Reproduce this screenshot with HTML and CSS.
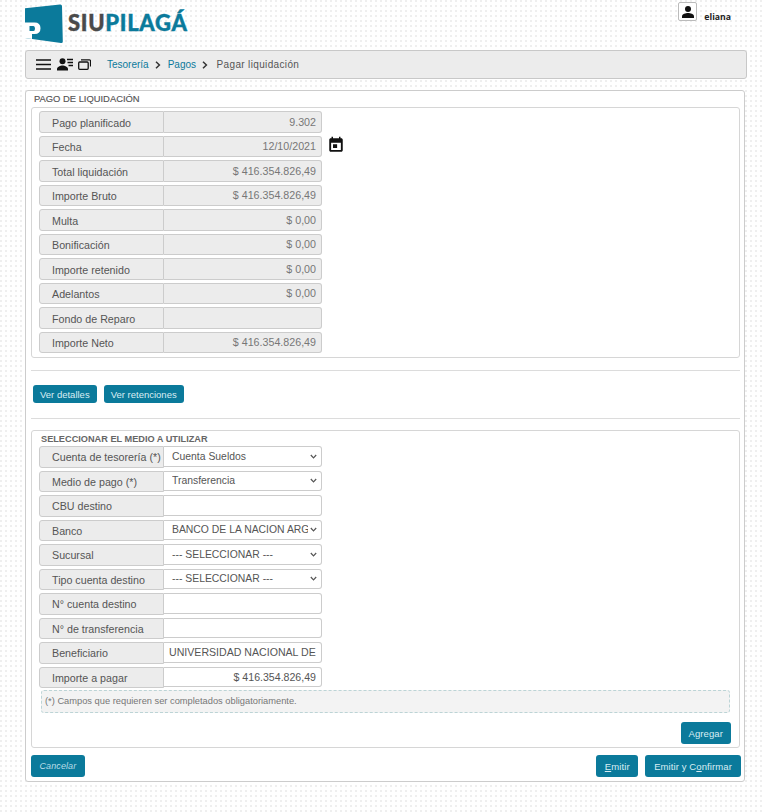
FILE: index.html
```html
<!DOCTYPE html>
<html lang="es">
<head>
<meta charset="utf-8">
<title>SIU Pilagá - Pagar liquidación</title>
<link rel="stylesheet" href="styles.css">
</head>
<body>
<header class="top">
  <div class="brand">
    <svg class="logo" width="38" height="40" viewBox="0 0 38 40">
      <path d="M0 4.200 L35 .4 Q37 .2 37 2.200 L37.800 37.500 Q37.800 39.300 36 39 L0 34 Z" fill="#0b7a9b"/>
      <path fill-rule="evenodd" fill="#fff" d="M0 18.500 H9.500 Q15.500 18.500 15.500 24.200 Q15.500 30 9.500 30 H7 V34.900 L0 34 Z M4.500 22 V27 H8.500 Q10 27 10 24.500 Q10 22 8.500 22 Z"/>
    </svg>
    <span class="brand-name"><span class="brand-siu">SIU</span>PILAGÁ</span>
  </div>
  <div class="user">
    <span class="user-box">
      <svg width="16" height="16" viewBox="0 0 24 24"><circle cx="12" cy="7.500" r="4.500" fill="#111"/><path d="M3 21v-2.500C3 15 8.500 13.500 12 13.500s9 1.500 9 5V21z" fill="#111"/></svg>
    </span>
    <span class="user-name">eliana</span>
  </div>
</header>

<nav class="toolbar">
  <div class="tools">
    <svg width="15" height="11" viewBox="0 0 15 11"><path d="M0 1h15M0 5.500h15M0 10h15" stroke="#111" stroke-width="1.700" fill="none"/></svg>
    <svg width="16" height="13" viewBox="0 0 16 13"><circle cx="5.500" cy="3.300" r="3" fill="#111"/><path d="M0 12.500v-1.500C0 8.700 3.500 7.500 5.500 7.500s5.500 1.200 5.500 3.500v1.500z" fill="#111"/><path d="M10 1.500h6M10.500 4.500h5.500M11.500 7.500h4.500" stroke="#111" stroke-width="1.300"/></svg>
    <svg width="13" height="11" viewBox="0 0 13 11"><rect x=".7" y="3" width="9.500" height="7.300" rx="1" fill="none" stroke="#111" stroke-width="1.300"/><path d="M3 .8h8.500a1 1 0 0 1 1 1V7.500" fill="none" stroke="#111" stroke-width="1.200"/></svg>
  </div>
  <ol class="crumbs">
    <li><a href="#">Tesorería</a></li>
    <li class="sep"><svg width="6" height="8" viewBox="0 0 6 8"><path d="M1 .8 4.400 4 1 7.200" fill="none" stroke="#333" stroke-width="1.500"/></svg></li>
    <li><a href="#">Pagos</a></li>
    <li class="sep"><svg width="6" height="8" viewBox="0 0 6 8"><path d="M1 .8 4.400 4 1 7.200" fill="none" stroke="#333" stroke-width="1.500"/></svg></li>
    <li class="crumb-current">Pagar liquidación</li>
  </ol>
</nav>

<main class="panel">
  <h2 class="panel-title">PAGO DE LIQUIDACIÓN</h2>
  <section class="group group-pago">
    <div class="row"><span class="lbl">Pago planificado</span><span class="val">9.302</span></div>
    <div class="row-with-icon">
      <div class="row"><span class="lbl">Fecha</span><span class="val">12/10/2021</span></div>
      <svg class="cal" width="18" height="18" viewBox="0 0 24 24"><path fill="#111" fill-rule="evenodd" d="M6 1v2H5C3.900 3 3 3.900 3 5v14c0 1.100.9 2 2 2h14c1.100 0 2-.9 2-2V5c0-1.100-.9-2-2-2h-1V1h-2v2H8V1H6zM5.500 9h13v9.500h-13z"/><rect x="8" y="11" width="5.500" height="5" fill="#111"/></svg>
    </div>
    <div class="row"><span class="lbl">Total liquidación</span><span class="val">$ 416.354.826,49</span></div>
    <div class="row"><span class="lbl">Importe Bruto</span><span class="val">$ 416.354.826,49</span></div>
    <div class="row"><span class="lbl">Multa</span><span class="val">$ 0,00</span></div>
    <div class="row"><span class="lbl">Bonificación</span><span class="val">$ 0,00</span></div>
    <div class="row"><span class="lbl">Importe retenido</span><span class="val">$ 0,00</span></div>
    <div class="row"><span class="lbl">Adelantos</span><span class="val">$ 0,00</span></div>
    <div class="row"><span class="lbl">Fondo de Reparo</span><span class="val"></span></div>
    <div class="row"><span class="lbl">Importe Neto</span><span class="val">$ 416.354.826,49</span></div>
  </section>

  <hr class="rule rule-a">
  <div class="actions">
    <button class="btn btn-sm" type="button">Ver detalles</button>
    <button class="btn btn-sm" type="button">Ver retenciones</button>
  </div>
  <hr class="rule rule-b">

  <section class="group group-medio">
    <h3 class="group-title">SELECCIONAR EL MEDIO A UTILIZAR</h3>
    <div class="row"><label class="lbl">Cuenta de tesorería (*)</label><select class="ctl"><option>Cuenta Sueldos</option></select></div>
    <div class="row"><label class="lbl">Medio de pago (*)</label><select class="ctl"><option>Transferencia</option></select></div>
    <div class="row"><label class="lbl">CBU destino</label><input class="ctl" type="text"></div>
    <div class="row"><label class="lbl">Banco</label><select class="ctl"><option>BANCO DE LA NACION ARGENTINA</option></select></div>
    <div class="row"><label class="lbl">Sucursal</label><select class="ctl"><option>--- SELECCIONAR ---</option></select></div>
    <div class="row"><label class="lbl">Tipo cuenta destino</label><select class="ctl"><option>--- SELECCIONAR ---</option></select></div>
    <div class="row"><label class="lbl">N° cuenta destino</label><input class="ctl" type="text"></div>
    <div class="row"><label class="lbl">N° de transferencia</label><input class="ctl" type="text"></div>
    <div class="row"><label class="lbl">Beneficiario</label><input class="ctl ctl-left" type="text" value="UNIVERSIDAD NACIONAL DE SAN JUAN"></div>
    <div class="row"><label class="lbl">Importe a pagar</label><input class="ctl ctl-right" type="text" value="$ 416.354.826,49"></div>
    <p class="note">(*) Campos que requieren ser completados obligatoriamente.</p>
    <div class="add-line"><button class="btn btn-add" type="button">Agregar</button></div>
  </section>

  <footer class="foot">
    <button class="btn btn-cancel" type="button">Cancelar</button>
    <div class="foot-right">
      <button class="btn" type="button"><u>E</u>mitir</button>
      <button class="btn btn-wide" type="button">Emitir y C<u>o</u>nfirmar</button>
    </div>
  </footer>
</main>
</body>
</html>
```

FILE: styles.css
```css
* { box-sizing: border-box; }

html, body { margin: 0; padding: 0; }

body {
  width: 763px;
  height: 812px;
  overflow: hidden;
  padding-left: 25px;
  font-family: "Liberation Sans", Arial, sans-serif;
  font-size: 10.700px;
  color: #555;
  background-color: #fff;
  background-image: radial-gradient(circle at 1px 1px, #efefef .8px, transparent 1px);
  background-size: 5px 5px;
}

/* header */
.top {
  display: flex;
  justify-content: space-between;
  height: 50px;
  width: 714px;
}

.brand { display: flex; align-items: flex-start; gap: 5px; padding-top: 4px; }
.logo { display: block; flex: none; }

.brand-name {
  font-family: Lato, "Open Sans", sans-serif;
  font-weight: 900;
  font-size: 22px;
  line-height: 30px;
  letter-spacing: .7px;
  color: #0b7a9b;
  -webkit-text-stroke: .4px currentColor;
  margin-top: 4px;
}
.brand-siu { color: #4a4a4a; }

.user { display: flex; align-items: flex-start; gap: 7px; padding-top: 2px; margin-right: 8px; }
.user-box {
  display: flex;
  align-items: center;
  justify-content: center;
  width: 19px;
  height: 19px;
  border: 1px solid #bbb;
  border-radius: 2px;
  background: #fff;
}
.user-name {
  font-family: "Open Sans", sans-serif;
  font-weight: 700;
  font-size: 8.700px;
  color: #222;
  margin-top: 9px;
  line-height: 13px;
}

/* toolbar */
.toolbar {
  display: flex;
  align-items: center;
  width: 722px;
  height: 29px;
  padding-left: 10px;
  background: #ececec;
  border: 1px solid #c8c8c8;
  border-radius: 3px;
}
.tools { display: flex; align-items: center; gap: 5.500px; width: 71px; }
.tools svg { display: block; flex: none; }

.crumbs {
  display: flex;
  align-items: center;
  margin: 0;
  padding: 0;
  list-style: none;
  font-size: 10px;
  color: #555;
}
.crumbs a { color: #0b7a9b; text-decoration: none; }
.sep { display: flex; padding: 0 7px 0 6px; }
.crumb-current { margin-left: 1.500px; letter-spacing: .35px; }

/* main panel */
.panel {
  width: 720px;
  height: 692px;
  margin-top: 11px;
  padding: 0 3px 0 5px;
  background: #fff;
  border: 1px solid #ccc;
  border-radius: 3px;
}

.panel-title {
  margin: 0 0 0 3px;
  height: 16px;
  font-size: 9.400px;
  font-weight: 400;
  line-height: 15px;
  color: #555;
  -webkit-text-stroke: .15px #555;
}

.group {
  width: 709px;
  background: #fff;
  border: 1px solid #d6d6d6;
  border-radius: 3px;
  padding: 3px 6px 0 7px;
}
.group-pago { height: 251px; }
.group-medio { height: 318px; padding-top: 0; }
.group-medio .lbl { padding-top: 1px; }

.group-title {
  margin: 0 0 0 2px;
  height: 15px;
  font-size: 9.200px;
  font-weight: 700;
  line-height: 16px;
  color: #666;
}

.rule {
  width: 709px;
  height: 1px;
  margin: 0;
  border: 0;
  background: #dcdcdc;
}
.rule-a { margin-top: 12px; }
.rule-b { margin-top: 15px; margin-bottom: 11px; }

.actions { display: flex; gap: 7px; padding: 14px 0 0 2px; }

/* rows */
.row {
  display: flex;
  width: 283px;
  height: 21.500px;
  margin-bottom: 3px;
  flex: none;
}
.row-with-icon { display: flex; align-items: flex-start; gap: 5px; }

.lbl {
  display: flex;
  align-items: center;
  flex: none;
  width: 125px;
  padding: 2px 0 0 12px;
  white-space: nowrap;
  background: #ececec;
  border: 1px solid #ccc;
  border-radius: 3px 0 0 3px;
  color: #555;
}

.val {
  display: flex;
  align-items: center;
  justify-content: flex-end;
  flex: 1;
  padding-right: 5px;
  background: #ececec;
  border: 1px solid #ccc;
  border-left: 0;
  border-radius: 0 3px 3px 0;
  color: #777;
}

.ctl {
  flex: 1;
  min-width: 0;
  height: 20.500px;
  margin: 0;
  background-color: #fff;
  border: 1px solid #ccc;
  border-left: 0;
  border-radius: 0 3px 3px 0;
  font: inherit;
  color: #555;
  outline: none;
}
select.ctl {
  appearance: none;
  -webkit-appearance: none;
  padding: 0 13px 0 8px;
  font-size: 10.400px;
  background-image: url("data:image/svg+xml,%3Csvg xmlns='http://www.w3.org/2000/svg' width='7' height='5' viewBox='0 0 7 5'%3E%3Cpath d='M.8 1 3.500 3.800 6.200 1' fill='none' stroke='%23555' stroke-width='1.200'/%3E%3C/svg%3E");
  background-repeat: no-repeat;
  background-position: right 4px center;
}
input.ctl { padding: 0 5px; font-size: 10.600px; }
.ctl-right { text-align: right; }
.ctl-left { padding-right: 0; }

.note {
  height: 23px;
  width: 689px;
  margin: -1px 0 0 2px;
  padding: 0 3px;
  background: #f3f3f3;
  border: 1px dashed #bcd4d6;
  border-radius: 3px;
  font-size: 9.300px;
  line-height: 21px;
  color: #777;
}

.add-line { display: flex; justify-content: flex-end; width: 692px; padding-top: 9px; }

/* buttons */
.btn {
  height: 22px;
  padding: 0 8.500px;
  background: #0b7a9b;
  border: 0;
  border-radius: 3px;
  font: inherit;
  font-size: 9.500px;
  letter-spacing: .1px;
  color: #d9edf3;
}
.btn-sm { height: 18px; padding: 0 7px; letter-spacing: 0; }
.btn-add { padding: 0 8px; }
.btn-wide { padding: 0 9px; }
.btn-cancel { font-size: 9px; font-style: italic; color: #b9dde8; }

.foot {
  display: flex;
  justify-content: space-between;
  align-items: center;
  width: 710px;
  padding-top: 7px;
}
.foot-right { display: flex; gap: 7px; }
```
